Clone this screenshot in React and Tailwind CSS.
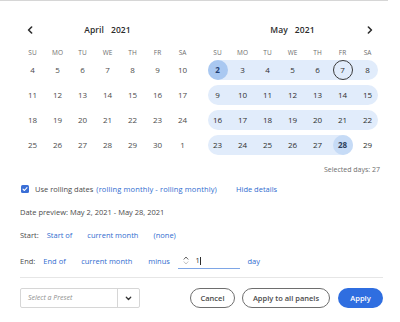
import React from 'react';

const DAYS = ['SU', 'MO', 'TU', 'WE', 'TH', 'FR', 'SA'];

const april = [
  [4, 5, 6, 7, 8, 9, 10],
  [11, 12, 13, 14, 15, 16, 17],
  [18, 19, 20, 21, 22, 23, 24],
  [25, 26, 27, 28, 29, 30, 1],
];

const may = [
  [2, 3, 4, 5, 6, 7, 8],
  [9, 10, 11, 12, 13, 14, 15],
  [16, 17, 18, 19, 20, 21, 22],
  [23, 24, 25, 26, 27, 28, 29],
];

function Chevron({ dir }) {
  return (
    <svg width="6" height="8" viewBox="0 0 6 8" fill="none">
      <path
        d={dir === 'left' ? 'M4.6 1 L1.6 4 L4.6 7' : 'M1.4 1 L4.4 4 L1.4 7'}
        stroke="#2c2c2c"
        strokeWidth="1.6"
        strokeLinecap="round"
        strokeLinejoin="round"
      />
    </svg>
  );
}

function Cell({ day, kind }) {
  let cls = 'w-[20px] h-[20px] flex items-center justify-center rounded-full shrink-0';
  if (kind === 'start') cls += ' bg-[#a9c8f1] font-bold text-[#1f3f73]';
  if (kind === 'today') cls += ' border-[1.5px] border-[#3a3a3a]';
  if (kind === 'end') cls += ' bg-[#c6dbf6] font-bold text-[#2c3e5c]';
  return <div className={cls}>{day}</div>;
}

function Header({ title, arrow }) {
  return (
    <div className="grid grid-cols-[20px_1fr_20px] h-[16px] items-center">
      <div className="flex justify-center">{arrow === 'left' && <Chevron dir="left" />}</div>
      <div className="text-center text-[8.5px] font-semibold text-[#2c2c2c] tracking-[0.1px]">
        {title}
      </div>
      <div className="flex justify-center">{arrow === 'right' && <Chevron dir="right" />}</div>
    </div>
  );
}

function DayNames() {
  return (
    <div className="grid grid-cols-7 h-[11px] mt-[9px] items-center text-[6.5px] text-[#6e6e6e]">
      {DAYS.map((d) => (
        <div key={d} className="text-center">
          {d}
        </div>
      ))}
    </div>
  );
}

function AprilCalendar() {
  return (
    <div className="w-[175px]">
      <Header title={<span>April&nbsp;&nbsp;&nbsp;2021</span>} arrow="left" />
      <DayNames />
      {april.map((row, i) => (
        <div key={i} className="h-[24.8px] px-[2.5px] flex items-center gap-[5px] text-[8px] text-[#4b4b4b]">
          {row.map((d) => (
            <Cell key={d} day={d} />
          ))}
        </div>
      ))}
    </div>
  );
}

function MayCalendar() {
  return (
    <div className="w-[175px]">
      <Header title={<span>May&nbsp;&nbsp;&nbsp;2021</span>} arrow="right" />
      <DayNames />
      {may.map((row, i) => {
        const last = i === 3;
        const inBand = last ? row.slice(0, 6) : row;
        return (
          <div key={i} className="h-[24.8px] px-[2.5px] flex items-center gap-[5px] text-[8px] text-[#2e2e2e]">
            <div className="flex gap-[5px] bg-[#e1ecfb] rounded-full">
              {inBand.map((d) => (
                <Cell
                  key={d}
                  day={d}
                  kind={d === 2 ? 'start' : d === 7 ? 'today' : d === 28 ? 'end' : undefined}
                />
              ))}
            </div>
            {last && <Cell day={29} />}
          </div>
        );
      })}
    </div>
  );
}

export default function App() {
  const link = 'text-[#2f6ccf]';
  return (
    <div className="w-[400px] h-[322px] bg-white text-[7.5px] text-[#4b4b4b] font-['Open_Sans',sans-serif] overflow-hidden">
      <div className="w-[388px] h-px bg-[#d6d6d6]" />
      <div className="pl-[20px] pt-[21px] flex gap-[10px]">
        <AprilCalendar />
        <MayCalendar />
      </div>

      <div className="px-[20px] flex flex-col">
        <div className="h-[10px] mt-[8px] flex items-center justify-end text-[7px] text-[#6e6e6e]">
          Selected days: 27
        </div>

        <div className="h-[12px] mt-[8px] flex items-center">
          <div className="w-[7.5px] h-[7.5px] ml-[1px] rounded-[1.5px] bg-[#3b6fd6] flex items-center justify-center">
            <svg width="6" height="6" viewBox="0 0 6 6" fill="none">
              <path d="M1 3.1 L2.4 4.5 L5 1.6" stroke="white" strokeWidth="1.1" strokeLinecap="round" strokeLinejoin="round" />
            </svg>
          </div>
          <span className="ml-[6.5px]">Use rolling dates</span>
          <span className={`ml-[3px] tracking-[0.12px] ${link}`}>(rolling monthly - rolling monthly)</span>
          <span className={`ml-[19px] ${link}`}>Hide details</span>
        </div>

        <div className="h-[12px] mt-[11px] flex items-center">
          Date preview: May 2, 2021 - May 28, 2021
        </div>

        <div className="h-[12px] mt-[11px] flex items-center">
          <span>Start:</span>
          <span className={`ml-[8px] ${link}`}>Start of</span>
          <span className={`ml-[15px] ${link}`}>current month</span>
          <span className={`ml-[15px] ${link}`}>(none)</span>
        </div>

        <div className="h-[12px] mt-[14px] flex items-center">
          <span>End:</span>
          <span className={`ml-[8px] ${link}`}>End of</span>
          <span className={`ml-[15.5px] ${link}`}>current month</span>
          <span className={`ml-[16px] ${link}`}>minus</span>
          <div className="ml-[8.5px] w-[62px] h-[16px] border-b-[1.5px] border-[#7ea6e6] flex items-center shrink-0">
            <div className="flex flex-col items-center ml-[5px] gap-[1px]">
              <svg width="6" height="4" viewBox="0 0 6 4" fill="none">
                <path d="M1 3.2 L3 1 L5 3.2" stroke="#555" strokeWidth="0.9" strokeLinecap="round" />
              </svg>
              <svg width="6" height="4" viewBox="0 0 6 4" fill="none">
                <path d="M1 0.8 L3 3 L5 0.8" stroke="#bbb" strokeWidth="0.9" strokeLinecap="round" />
              </svg>
            </div>
            <span className="ml-[6px] text-[#2c2c2c]">1</span>
            <span className="w-px h-[8px] bg-[#2c2c2c] ml-[0.5px]" />
          </div>
          <span className={`ml-[7px] ${link}`}>day</span>
        </div>

        <div className="h-px mt-[10px] bg-[#e6e6e6] w-[363px]" />

        <div className="mt-[10px] -mr-[3px] flex items-center">
          <div className="w-[120px] h-[20px] border border-[#d6d6d6] rounded-[2px] flex">
            <div className="flex-1 flex items-center pl-[7px] italic text-[7px] text-[#8f8f8f]">
              Select a Preset
            </div>
            <div className="w-[22px] border-l border-[#d6d6d6] flex items-center justify-center">
              <svg width="7" height="5" viewBox="0 0 7 5" fill="none">
                <path d="M1.3 1.3 L3.5 3.5 L5.7 1.3" stroke="#333" strokeWidth="1.3" strokeLinecap="round" strokeLinejoin="round" />
              </svg>
            </div>
          </div>
          <div className="ml-auto flex items-center gap-[7px] text-[7.5px] font-semibold">
            <button className="h-[20px] w-[45px] rounded-full border-[1.5px] border-[#6e6e6e] text-[#4b4b4b] flex items-center justify-center">
              Cancel
            </button>
            <button className="h-[20px] w-[88px] rounded-full border-[1.5px] border-[#6e6e6e] text-[#4b4b4b] flex items-center justify-center">
              Apply to all panels
            </button>
            <button className="h-[20px] w-[45px] rounded-full bg-[#2f6ee0] text-white flex items-center justify-center ml-[1px]">
              Apply
            </button>
          </div>
        </div>
      </div>
    </div>
  );
}
